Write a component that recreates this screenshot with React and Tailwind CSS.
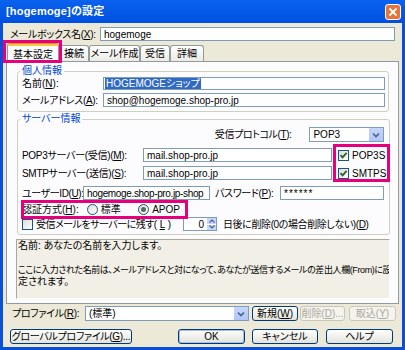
import React from "react";

const FONT = "font-['Liberation_Sans','Noto_Sans_CJK_JP',sans-serif] [font-feature-settings:'palt']";

function U({ children }) {
  return <span className="underline underline-offset-1">{children}</span>;
}

function Input({ className = "", children }) {
  return (
    <div className={"h-[14px] border border-[#7F9DB9] bg-white flex items-center px-[3px] text-[10px] text-black overflow-hidden whitespace-nowrap " + className}>
      {children}
    </div>
  );
}

function Btn({ className = "", disabled = false, def = false, children }) {
  const base = disabled
    ? "border-[#C9C7BA] text-[#ACA899] bg-[#F4F3EE]"
    : def
    ? "border-[#003C74] text-black bg-linear-to-b from-white to-[#E3E2DA] shadow-[inset_0_0_0_1px_#A7BEF0]"
    : "border-[#003C74] text-black bg-linear-to-b from-white to-[#E3E2DA]";
  return (
    <div className={"h-[15px] border rounded-[3px] flex items-center justify-center text-[10px] whitespace-nowrap " + base + " " + className}>
      {children}
    </div>
  );
}

function Check({ checked }) {
  return (
    <div className="w-[11px] h-[11px] border border-[#1C5180] bg-linear-to-br from-[#DCDCD7] to-white flex items-center justify-center shrink-0">
      {checked && (
        <svg width="9" height="9" viewBox="0 0 9 9">
          <path d="M1.5 4.2 L3.6 6.4 L7.6 1.8" stroke="#2C5F2C" strokeWidth="1.8" fill="none" />
        </svg>
      )}
    </div>
  );
}

function Radio({ checked }) {
  return (
    <div className="w-[11px] h-[11px] rounded-full border border-[#1C5180] bg-linear-to-br from-[#DCDCD7] to-white flex items-center justify-center shrink-0">
      {checked && <div className="w-[5px] h-[5px] rounded-full bg-[#5A6B5A]" />}
    </div>
  );
}

function DropArrow() {
  return (
    <div className="w-[15px] h-full bg-linear-to-b from-[#C6D6FC] to-[#B1C7F8] border-l border-white flex items-center justify-center shrink-0">
      <svg width="8" height="6" viewBox="0 0 8 6">
        <path d="M1 1.5 L4 4.5 L7 1.5" stroke="#4D6185" strokeWidth="1.6" fill="none" />
      </svg>
    </div>
  );
}

export default function App() {
  return (
    <div className={"w-[405px] h-[350px] bg-[#0A4FD8] flex flex-col overflow-hidden text-black " + FONT}>
      {/* title bar */}
      <div className="h-[23px] shrink-0 flex items-center justify-between pl-[6px] pr-[4px] bg-linear-to-b from-[#0A62EE] to-[#0050E0]">
        <span className="text-white font-bold text-[11px] tracking-[0.2px]">[hogemoge]の設定</span>
        <div className="w-[16px] h-[16px] rounded-[3px] border border-white bg-[#E5753D] flex items-center justify-center">
          <svg width="10" height="10" viewBox="0 0 10 10">
            <path d="M1.5 1.5 L8.5 8.5 M8.5 1.5 L1.5 8.5" stroke="white" strokeWidth="1.8" />
          </svg>
        </div>
      </div>

      {/* body */}
      <div className="flex-1 mx-[3px] mb-[3px] bg-[#ECE9D8] flex flex-col relative">
        {/* mailbox name */}
        <div className="mt-[4px] h-[14px] flex items-center pl-[7px] pr-[7px]">
          <div className="w-[90px] text-[10px] whitespace-nowrap tracking-[-0.3px]">メールボックス名(<U>X</U>):</div>
          <Input className="flex-1">hogemoge</Input>
        </div>

        {/* tabs */}
        <div className="mt-[1px] ml-[4px] h-[19px] flex items-end relative z-10">
          <div className="relative w-[52px] h-[19px] mb-[-1px] bg-[#FCFCFE] border-x border-[#919B9C] rounded-t-[3px] flex flex-col">
            <div className="h-[3px] bg-[#FFC83C] rounded-t-[2px] border-t border-[#E68B2C]" />
            <div className="flex-1 flex items-center justify-center text-[10px]">基本設定</div>
            <div className="absolute left-[-5px] top-[-3px] w-[59px] h-[23px] border-[3px] border-[#E6007E]" />
          </div>
          <div className="w-[30px] h-[16px] bg-linear-to-b from-white to-[#ECEBE6] border border-b-0 border-[#919B9C] rounded-t-[3px] flex items-center justify-center text-[10px]">接続</div>
          <div className="w-[51px] h-[16px] bg-linear-to-b from-white to-[#ECEBE6] border border-b-0 border-[#919B9C] rounded-t-[3px] flex items-center justify-center text-[10px]">メール作成</div>
          <div className="w-[30px] h-[16px] bg-linear-to-b from-white to-[#ECEBE6] border border-b-0 border-[#919B9C] rounded-t-[3px] flex items-center justify-center text-[10px]">受信</div>
          <div className="w-[34px] h-[16px] bg-linear-to-b from-white to-[#ECEBE6] border border-b-0 border-[#919B9C] rounded-t-[3px] flex items-center justify-center text-[10px]">詳細</div>
        </div>

        {/* tab panel */}
        <div className="mx-[3px] h-[243px] border border-[#919B9C] bg-[#FCFCFE] flex flex-col">
          {/* personal info */}
          <fieldset className="mt-[3px] ml-[10px] w-[372px] border border-[#D0D0BF] rounded-[3px] pl-[2px] pr-[3px] pb-[4px]">
            <legend className="px-[2px] text-[10px] text-[#0046D5] leading-[12px]">個人情報</legend>
            <div className="h-[13px] flex items-center">
              <div className="w-[83px] pl-[2px] text-[10px] whitespace-nowrap">名前(<U>N</U>):</div>
              <div className="flex-1 h-[13px] border border-[#7F9DB9] bg-white flex items-center px-[1px]">
                <span className="bg-[#316AC5] text-white text-[10px] leading-[11px] px-[1px]">HOGEMOGEショップ</span>
              </div>
            </div>
            <div className="mt-[3px] h-[14px] flex items-center">
              <div className="w-[83px] pl-[2px] text-[10px] whitespace-nowrap tracking-[-0.3px]">メールアドレス(<U>A</U>):</div>
              <Input className="flex-1">shop@hogemoge.shop-pro.jp</Input>
            </div>
          </fieldset>

          {/* server info */}
          <fieldset className="mt-[1px] ml-[10px] w-[372px] border border-[#D0D0BF] rounded-[3px] pl-[2px] pr-[3px] pb-[3px]">
            <legend className="px-[2px] text-[10px] text-[#0046D5] leading-[12px]">サーバー情報</legend>
            <div className="mt-[2px] h-[15px] flex items-center justify-end pr-[2px]">
              <div className="text-[10px] whitespace-nowrap mr-[18px] tracking-[-0.4px]">受信プロトコル(<U>T</U>):</div>
              <div className="w-[75px] h-[15px] border border-[#7F9DB9] bg-white flex items-stretch">
                <div className="flex-1 flex items-center px-[3px] text-[10px]">POP3</div>
                <DropArrow />
              </div>
            </div>
            <div className="flex items-start">
              <div className="flex flex-col">
                <div className="mt-[6px] h-[14px] flex items-center">
                  <div className="w-[123px] pl-[2px] text-[10px] whitespace-nowrap tracking-[-0.3px]">POP3サーバー(受信)(<U>M</U>):</div>
                  <Input className="w-[189px]">mail.shop-pro.jp</Input>
                </div>
                <div className="mt-[4px] h-[14px] flex items-center">
                  <div className="w-[123px] pl-[2px] text-[10px] whitespace-nowrap tracking-[-0.3px]">SMTPサーバー(送信)(<U>S</U>):</div>
                  <Input className="w-[189px]">mail.shop-pro.jp</Input>
                </div>
              </div>
              <div className="relative ml-[6px] mt-[6px] flex flex-col">
                <div className="h-[14px] flex items-center gap-[3px] text-[10px]">
                  <Check checked />POP3S
                </div>
                <div className="mt-[4px] h-[14px] flex items-center gap-[3px] text-[10px]">
                  <Check checked />SMTPS
                </div>
                <div className="absolute left-[-5px] top-[-4px] w-[57px] h-[38px] border-[3px] border-[#E6007E]" />
              </div>
            </div>
            <div className="mt-[6px] h-[14px] flex items-center">
              <div className="w-[63px] pl-[2px] text-[10px] whitespace-nowrap tracking-[-0.4px]">ユーザーID(<U>U</U>):</div>
              <Input className="w-[127px] px-[2px] tracking-[-0.35px]">hogemoge.shop-pro.jp-shop</Input>
              <div className="w-[70px] pl-[5px] text-[10px] whitespace-nowrap tracking-[-0.3px]">パスワード(<U>P</U>):</div>
              <Input className="w-[104px] tracking-[1px]">******</Input>
            </div>
            <div className="relative mt-[3px] h-[13px] flex items-center w-[160px]">
              <div className="w-[68px] pl-[2px] text-[10px] whitespace-nowrap">認証方式(<U>H</U>):</div>
              <Radio />
              <span className="ml-[3px] text-[10px] w-[38px]">標準</span>
              <Radio checked />
              <span className="ml-[3px] text-[10px]">APOP</span>
              <div className="absolute left-[1px] top-[-3px] w-[167px] h-[19px] border-[3px] border-[#E6007E]" />
            </div>
            <div className="mt-[1px] h-[14px] flex items-center">
              <div className="w-[163px] pl-[2px] flex items-center gap-[3px] text-[10px] whitespace-nowrap tracking-[-0.5px]">
                <Check />受信メールをサーバーに残す(<U>L</U>)
              </div>
              <div className="w-[34px] h-[14px] border border-[#7F9DB9] bg-white flex items-stretch">
                <div className="flex-1 flex items-center justify-end pr-[2px] text-[10px]">0</div>
                <div className="w-[10px] flex flex-col bg-[#C6D6FC] border-l border-white">
                  <div className="flex-1 flex items-center justify-center border-b border-white">
                    <svg width="6" height="4" viewBox="0 0 6 4"><path d="M0.5 3.5 L3 1 L5.5 3.5" stroke="#4D6185" strokeWidth="1.2" fill="none" /></svg>
                  </div>
                  <div className="flex-1 flex items-center justify-center">
                    <svg width="6" height="4" viewBox="0 0 6 4"><path d="M0.5 0.5 L3 3 L5.5 0.5" stroke="#4D6185" strokeWidth="1.2" fill="none" /></svg>
                  </div>
                </div>
              </div>
              <div className="ml-[6px] text-[10px] whitespace-nowrap tracking-[-0.4px]">日後に削除(0の場合削除しない)(<U>D</U>)</div>
            </div>
          </fieldset>

          {/* description */}
          <div className="mt-[4px] ml-[9px] w-[374px] h-[60px] border border-t-[#ACA899] border-l-[#ACA899] border-b-white border-r-white bg-[#F1EFE6] px-[1px] text-[10px] leading-[12px] overflow-hidden">
            <div>名前: あなたの名前を入力します。</div>
            <div className="h-[12px]" />
            <div className="whitespace-nowrap text-[9px] tracking-[-0.4px]">ここに入力された名前は、メールアドレスと対になって、あなたが送信するメールの差出人欄(From)に設</div>
            <div className="whitespace-nowrap">定されます。</div>
          </div>
        </div>

        {/* profile row */}
        <div className="mt-[2px] h-[15px] flex items-center pl-[9px]">
          <div className="w-[73px] text-[10px] whitespace-nowrap tracking-[-0.3px]">プロファイル(<U>R</U>):</div>
          <div className="w-[164px] h-[15px] border border-[#7F9DB9] bg-white flex items-stretch">
            <div className="flex-1 flex items-center px-[3px] text-[10px]">(標準)</div>
            <DropArrow />
          </div>
          <Btn className="ml-[3px] w-[46px]">新規(<U>W</U>)</Btn>
          <Btn disabled className="ml-[2px] w-[45px]">削除(<U>D</U>)...</Btn>
          <Btn disabled className="ml-[4px] w-[47px]">取込(<U>Y</U>)</Btn>
        </div>

        {/* buttons row */}
        <div className="mt-[8px] h-[15px] flex items-center pl-[7px]">
          <Btn className="w-[122px] tracking-[-0.3px]">グローバルプロファイル(<U>G</U>)...</Btn>
          <Btn def className="ml-[46px] w-[67px]">OK</Btn>
          <Btn className="ml-[7px] w-[66px]">キャンセル</Btn>
          <Btn className="ml-[8px] w-[67px]">ヘルプ</Btn>
        </div>
      </div>
    </div>
  );
}
